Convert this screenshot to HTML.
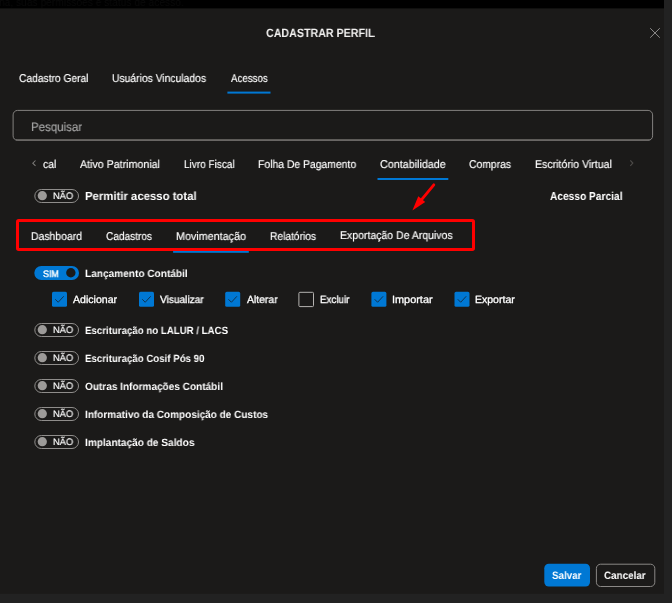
<!DOCTYPE html>
<html><head><meta charset="utf-8"><title>Cadastrar Perfil</title>
<style>
html,body{margin:0;padding:0;}
body{width:672px;height:603px;overflow:hidden;background:#222222;position:relative;font-family:"Liberation Sans",sans-serif;}
#shapes{position:absolute;left:0;top:0;}
.t{position:absolute;white-space:nowrap;line-height:16px;height:16px;transform-origin:0 50%;will-change:transform;text-rendering:geometricPrecision;}
</style></head><body>
<svg id="shapes" width="672" height="603" viewBox="0 0 672 603">
<rect x="0" y="0" width="672" height="603" fill="#222222"/>
<rect x="0" y="0" width="664" height="8.65" fill="#000"/>
<rect x="0" y="8.65" width="664" height="585.1" fill="#1b1a19"/>
<path d="M650.2 28.2 L659.8 37.7 M659.8 28.2 L650.2 37.7" stroke="#a3a19f" stroke-width="0.85" fill="none"/>
<path d="M15.8 139.55 H649.9" stroke="#585654" stroke-width="1.1" fill="none"/>
<rect x="13.1" y="110.4" width="639.5" height="30" rx="4.5" fill="none" stroke="#83817f" stroke-width="1"/>
<path d="M17.5 140.4 H648.2" stroke="#676563" stroke-width="1" fill="none"/>
<rect x="227.4" y="91.6" width="43.1" height="2" fill="#0078d4"/>
<rect x="377.5" y="178" width="70.8" height="2" fill="#0078d4"/>
<rect x="173.1" y="250.8" width="75.7" height="2" fill="#0078d4"/>
<path d="M35.5 160.5 L32.8 163.2 L35.5 165.9" stroke="#7c7a78" stroke-width="1.05" fill="none"/>
<path d="M630.3 160.4 L632.8 163.1 L630.3 165.8" stroke="#4c4a48" stroke-width="1.2" fill="none"/>
<rect x="17.5" y="220.5" width="456" height="29" rx="1.2" fill="none" stroke="#ff0000" stroke-width="3"/>
<path d="M433.8 184.8 L421 200.3" stroke="#ff0000" stroke-width="2.8" stroke-linecap="round" fill="none"/>
<path d="M412.4 210.6 L418.3 196.3 L425.2 202 Z" fill="#ff0000"/>
<rect x="34.80" y="189.50" width="43.7" height="13" rx="6.5" fill="none" stroke="#8f8d8b" stroke-width="1"/><circle cx="42.30" cy="195.70" r="4.6" fill="#9d9b99"/>
<rect x="34.30" y="266.00" width="44.7" height="14" rx="7" fill="#0078d4"/><circle cx="70.85" cy="272.80" r="4.7" fill="#1b1a19"/>
<rect x="34.80" y="323.50" width="43.7" height="13" rx="6.5" fill="none" stroke="#8f8d8b" stroke-width="1"/><circle cx="42.30" cy="329.70" r="4.6" fill="#9d9b99"/>
<rect x="34.80" y="351.50" width="43.7" height="13" rx="6.5" fill="none" stroke="#8f8d8b" stroke-width="1"/><circle cx="42.30" cy="357.70" r="4.6" fill="#9d9b99"/>
<rect x="34.80" y="379.50" width="43.7" height="13" rx="6.5" fill="none" stroke="#8f8d8b" stroke-width="1"/><circle cx="42.30" cy="385.70" r="4.6" fill="#9d9b99"/>
<rect x="34.80" y="407.50" width="43.7" height="13" rx="6.5" fill="none" stroke="#8f8d8b" stroke-width="1"/><circle cx="42.30" cy="413.70" r="4.6" fill="#9d9b99"/>
<rect x="34.80" y="435.50" width="43.7" height="13" rx="6.5" fill="none" stroke="#8f8d8b" stroke-width="1"/><circle cx="42.30" cy="441.70" r="4.6" fill="#9d9b99"/>
<rect x="52.00" y="291.80" width="15" height="15" rx="1.6" fill="#0078d4"/><path d="M55.25 299.25 L58.20 302.25 L63.70 296.30" fill="none" stroke="#14202b" stroke-opacity="0.78" stroke-width="1"/>
<rect x="139.00" y="291.80" width="15" height="15" rx="1.6" fill="#0078d4"/><path d="M142.25 299.25 L145.20 302.25 L150.70 296.30" fill="none" stroke="#14202b" stroke-opacity="0.78" stroke-width="1"/>
<rect x="225.20" y="291.80" width="15" height="15" rx="1.6" fill="#0078d4"/><path d="M228.45 299.25 L231.40 302.25 L236.90 296.30" fill="none" stroke="#14202b" stroke-opacity="0.78" stroke-width="1"/>
<rect x="298.90" y="292.30" width="14.6" height="14.3" rx="1.0" fill="none" stroke="#b5b3b1" stroke-width="1"/>
<rect x="371.40" y="291.80" width="15" height="15" rx="1.6" fill="#0078d4"/><path d="M374.65 299.25 L377.60 302.25 L383.10 296.30" fill="none" stroke="#14202b" stroke-opacity="0.78" stroke-width="1"/>
<rect x="454.50" y="291.80" width="15" height="15" rx="1.6" fill="#0078d4"/><path d="M457.75 299.25 L460.70 302.25 L466.20 296.30" fill="none" stroke="#14202b" stroke-opacity="0.78" stroke-width="1"/>
<rect x="544.3" y="563.8" width="45.7" height="22.8" rx="4.5" fill="#0078d4"/>
<rect x="596.4" y="564.2" width="58.4" height="22.3" rx="4.2" fill="none" stroke="#8a8886" stroke-width="1"/>
</svg>
<div style="position:absolute;left:0;top:0;width:664px;height:8.6px;overflow:hidden"><div style="position:absolute;left:-1px;top:-5px;font-size:11px;line-height:14px;color:#0b0b0b;white-space:nowrap;transform:scaleX(0.93);transform-origin:0 50%;will-change:transform">na, suas permissões e status de acesso.</div></div>
<div class="t" style="left:265.50px;top:25.00px;font-size:12.0px;font-weight:700;color:#f3f2f1;transform:scaleX(0.8897)">CADASTRAR PERFIL</div>
<div class="t" style="left:18.55px;top:71.00px;font-size:11.3px;font-weight:400;color:#ffffff;-webkit-text-stroke:0.15px #ffffff;transform:scaleX(0.9075)">Cadastro Geral</div>
<div class="t" style="left:111.58px;top:71.00px;font-size:11.3px;font-weight:400;color:#ffffff;-webkit-text-stroke:0.15px #ffffff;transform:scaleX(0.9148)">Usuários Vinculados</div>
<div class="t" style="left:230.58px;top:71.00px;font-size:11.3px;font-weight:400;color:#ffffff;-webkit-text-stroke:0.15px #ffffff;transform:scaleX(0.8624)">Acessos</div>
<div class="t" style="left:30.57px;top:119.00px;font-size:12.3px;font-weight:400;color:#a6a6a6;-webkit-text-stroke:0.15px #a6a6a6;transform:scaleX(0.9351)">Pesquisar</div>
<div class="t" style="left:42.54px;top:157.00px;font-size:11.3px;font-weight:400;color:#ffffff;-webkit-text-stroke:0.15px #ffffff;transform:scaleX(0.9140)">cal</div>
<div class="t" style="left:79.60px;top:157.00px;font-size:11.3px;font-weight:400;color:#ffffff;-webkit-text-stroke:0.15px #ffffff;transform:scaleX(0.9424)">Ativo Patrimonial</div>
<div class="t" style="left:183.54px;top:157.00px;font-size:11.3px;font-weight:400;color:#ffffff;-webkit-text-stroke:0.15px #ffffff;transform:scaleX(0.8870)">Livro Fiscal</div>
<div class="t" style="left:257.58px;top:157.00px;font-size:11.3px;font-weight:400;color:#ffffff;-webkit-text-stroke:0.15px #ffffff;transform:scaleX(0.9193)">Folha De Pagamento</div>
<div class="t" style="left:379.58px;top:157.00px;font-size:11.3px;font-weight:400;color:#ffffff;-webkit-text-stroke:0.15px #ffffff;transform:scaleX(0.9518)">Contabilidade</div>
<div class="t" style="left:468.57px;top:157.00px;font-size:11.3px;font-weight:400;color:#ffffff;-webkit-text-stroke:0.15px #ffffff;transform:scaleX(0.9157)">Compras</div>
<div class="t" style="left:534.56px;top:157.00px;font-size:11.3px;font-weight:400;color:#ffffff;-webkit-text-stroke:0.15px #ffffff;transform:scaleX(0.9371)">Escritório Virtual</div>
<div class="t" style="left:84.56px;top:188.00px;font-size:11.8px;font-weight:700;color:#ffffff;transform:scaleX(0.9617)">Permitir acesso total</div>
<div class="t" style="left:549.50px;top:189.00px;font-size:11.5px;font-weight:700;color:#ffffff;transform:scaleX(0.8848)">Acesso Parcial</div>
<div class="t" style="left:30.53px;top:229.00px;font-size:11.3px;font-weight:400;color:#ffffff;-webkit-text-stroke:0.15px #ffffff;transform:scaleX(0.9222)">Dashboard</div>
<div class="t" style="left:105.57px;top:229.00px;font-size:11.3px;font-weight:400;color:#ffffff;-webkit-text-stroke:0.15px #ffffff;transform:scaleX(0.8938)">Cadastros</div>
<div class="t" style="left:175.58px;top:229.00px;font-size:11.3px;font-weight:400;color:#ffffff;-webkit-text-stroke:0.15px #ffffff;transform:scaleX(0.9525)">Movimentação</div>
<div class="t" style="left:269.51px;top:229.00px;font-size:11.3px;font-weight:400;color:#ffffff;-webkit-text-stroke:0.15px #ffffff;transform:scaleX(0.9044)">Relatórios</div>
<div class="t" style="left:339.53px;top:228.00px;font-size:11.3px;font-weight:400;color:#ffffff;-webkit-text-stroke:0.15px #ffffff;transform:scaleX(0.9298)">Exportação De Arquivos</div>
<div class="t" style="left:84.54px;top:266.00px;font-size:10.5px;font-weight:700;color:#ffffff;transform:scaleX(0.9619)">Lançamento Contábil</div>
<div class="t" style="left:72.54px;top:292.00px;font-size:10.5px;font-weight:402;color:#ffffff;-webkit-text-stroke:0.3px #ffffff;transform:scaleX(1.0068)">Adicionar</div>
<div class="t" style="left:159.53px;top:292.00px;font-size:10.5px;font-weight:402;color:#ffffff;-webkit-text-stroke:0.3px #ffffff;transform:scaleX(0.9634)">Visualizar</div>
<div class="t" style="left:246.60px;top:292.00px;font-size:10.5px;font-weight:402;color:#ffffff;-webkit-text-stroke:0.3px #ffffff;transform:scaleX(0.9890)">Alterar</div>
<div class="t" style="left:319.50px;top:292.00px;font-size:10.5px;font-weight:402;color:#ffffff;-webkit-text-stroke:0.3px #ffffff;transform:scaleX(0.9343)">Excluir</div>
<div class="t" style="left:391.57px;top:292.00px;font-size:10.5px;font-weight:402;color:#ffffff;-webkit-text-stroke:0.3px #ffffff;transform:scaleX(1.0382)">Importar</div>
<div class="t" style="left:474.55px;top:292.00px;font-size:10.5px;font-weight:402;color:#ffffff;-webkit-text-stroke:0.3px #ffffff;transform:scaleX(1.0014)">Exportar</div>
<div class="t" style="left:84.55px;top:323.00px;font-size:10.5px;font-weight:700;color:#ffffff;transform:scaleX(0.9217)">Escrituração no LALUR / LACS</div>
<div class="t" style="left:84.55px;top:351.00px;font-size:10.5px;font-weight:700;color:#ffffff;transform:scaleX(0.9221)">Escrituração Cosif Pós 90</div>
<div class="t" style="left:84.50px;top:379.00px;font-size:10.5px;font-weight:700;color:#ffffff;transform:scaleX(0.9570)">Outras Informações Contábil</div>
<div class="t" style="left:84.51px;top:407.00px;font-size:10.5px;font-weight:700;color:#ffffff;transform:scaleX(0.9537)">Informativo da Composição de Custos</div>
<div class="t" style="left:84.51px;top:435.00px;font-size:10.5px;font-weight:700;color:#ffffff;transform:scaleX(0.9618)">Implantação de Saldos</div>
<div class="t" style="left:551.82px;top:568.00px;font-size:10.8px;font-weight:700;color:#ffffff;transform:scaleX(0.9062)">Salvar</div>
<div class="t" style="left:603.88px;top:568.00px;font-size:10.8px;font-weight:700;color:#ffffff;transform:scaleX(0.9109)">Cancelar</div>
<div class="t" style="left:52.50px;top:189.00px;font-size:9.5px;font-weight:400;color:#ffffff;-webkit-text-stroke:0.15px #ffffff;transform:scaleX(0.9763)">NÃO</div>
<div class="t" style="left:42.50px;top:266.00px;font-size:9.4px;font-weight:401;color:#ffffff;-webkit-text-stroke:0.4px #ffffff;transform:scaleX(0.9543)">SIM</div>
<div class="t" style="left:52.50px;top:323.00px;font-size:9.5px;font-weight:400;color:#ffffff;-webkit-text-stroke:0.15px #ffffff;transform:scaleX(0.9763)">NÃO</div>
<div class="t" style="left:52.50px;top:351.00px;font-size:9.5px;font-weight:400;color:#ffffff;-webkit-text-stroke:0.15px #ffffff;transform:scaleX(0.9763)">NÃO</div>
<div class="t" style="left:52.50px;top:379.00px;font-size:9.5px;font-weight:400;color:#ffffff;-webkit-text-stroke:0.15px #ffffff;transform:scaleX(0.9763)">NÃO</div>
<div class="t" style="left:52.50px;top:407.00px;font-size:9.5px;font-weight:400;color:#ffffff;-webkit-text-stroke:0.15px #ffffff;transform:scaleX(0.9763)">NÃO</div>
<div class="t" style="left:52.50px;top:435.00px;font-size:9.5px;font-weight:400;color:#ffffff;-webkit-text-stroke:0.15px #ffffff;transform:scaleX(0.9763)">NÃO</div>
</body></html>
